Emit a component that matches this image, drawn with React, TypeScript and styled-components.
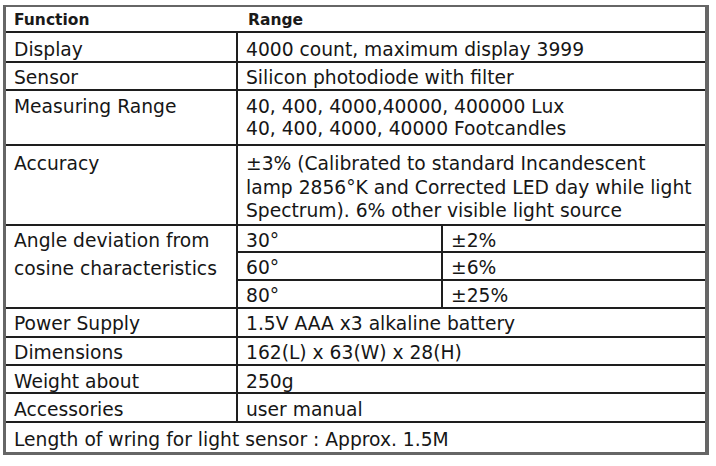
import React from 'react';
import styled, { createGlobalStyle } from 'styled-components';

const Global = createGlobalStyle`
  html, body { margin: 0; padding: 0; background: #ffffff; }
  body { font-family: "DejaVu Sans", Verdana, sans-serif; color: #161616; }
`;

const Frame = styled.div`
  margin: 5px 0 0 3px;
  width: 699px;
  border-style: solid;
  border-color: #666666;
  border-width: 2px 4px 3px 3px;
  background: #1e1e1e;
  display: grid;
  grid-template-columns: 230px 203px 262px;
  grid-template-rows: 24px 28px 26px 53px 78px 25px 26px 26px 27px 26px 26px 27px 29px;
  gap: 2px;
`;

const HeaderCell = styled.div`
  grid-column: 1 / -1;
  background: #ffffff;
  display: grid;
  grid-template-columns: 232px 1fr;
  padding: 4px 0 0 8px;
  font-weight: bold;
  font-size: 15.5px;
  line-height: 18px;
  color: #1a1a1a;
`;

const HeaderLabel = styled.span<{ $pl?: number }>`
  padding-left: ${(p) => p.$pl ?? 0}px;
`;

const Cell = styled.div<{ $span?: number; $rows?: number; $lh?: number; $pt?: number }>`
  background: #ffffff;
  grid-column: span ${(p) => p.$span ?? 1};
  grid-row: span ${(p) => p.$rows ?? 1};
  padding: ${(p) => p.$pt ?? 5}px 0 0 8px;
  font-size: 18.7px;
  line-height: ${(p) => p.$lh ?? 22}px;
  white-space: nowrap;
  overflow: hidden;
`;

const rows: [string, string][] = [
  ['Display', '4000 count, maximum display 3999'],
  ['Sensor', 'Silicon photodiode with filter'],
];

const rowsAfter: [string, string, number][] = [
  ['Power Supply', '1.5V AAA x3 alkaline battery', 4],
  ['Dimensions', '162(L) x 63(W) x 28(H)', 4],
  ['Weight about', '250g', 5],
  ['Accessories', 'user manual', 5],
];

const angles: [string, string][] = [
  ['30°', '±2%'],
  ['60°', '±6%'],
  ['80°', '±25%'],
];

export default function App() {
  return (
    <>
      <Global />
      <Frame>
        <HeaderCell>
          <HeaderLabel>Function</HeaderLabel>
          <HeaderLabel $pl={2}>Range</HeaderLabel>
        </HeaderCell>

        {rows.map(([k, v], i) => (
          <React.Fragment key={k}>
            <Cell $pt={i === 0 ? 6 : 4}>{k}</Cell>
            <Cell $span={2} $pt={i === 0 ? 6 : 4}>{v}</Cell>
          </React.Fragment>
        ))}

        <Cell>Measuring Range</Cell>
        <Cell $span={2}>
          40, 400, 4000,40000, 400000 Lux
          <br />
          40, 400, 4000, 40000 Footcandles
        </Cell>

        <Cell $lh={23.5} $pt={6}>Accuracy</Cell>
        <Cell $span={2} $lh={23.5} $pt={6}>
          ±3% (Calibrated to standard Incandescent
          <br />
          lamp 2856°K and Corrected LED day while light
          <br />
          Spectrum). 6% other visible light source
        </Cell>

        <Cell $rows={3} $lh={28} $pt={1}>
          Angle deviation from
          <br />
          cosine characteristics
        </Cell>
        {angles.map(([a, b]) => (
          <React.Fragment key={a}>
            <Cell $pt={4}>{a}</Cell>
            <Cell $pt={4}>{b}</Cell>
          </React.Fragment>
        ))}

        {rowsAfter.map(([k, v, pt]) => (
          <React.Fragment key={k}>
            <Cell $pt={pt}>{k}</Cell>
            <Cell $span={2} $pt={pt}>{v}</Cell>
          </React.Fragment>
        ))}

        <Cell $span={3} $pt={6}>Length of wring for light sensor : Approx. 1.5M</Cell>
      </Frame>
    </>
  );
}
